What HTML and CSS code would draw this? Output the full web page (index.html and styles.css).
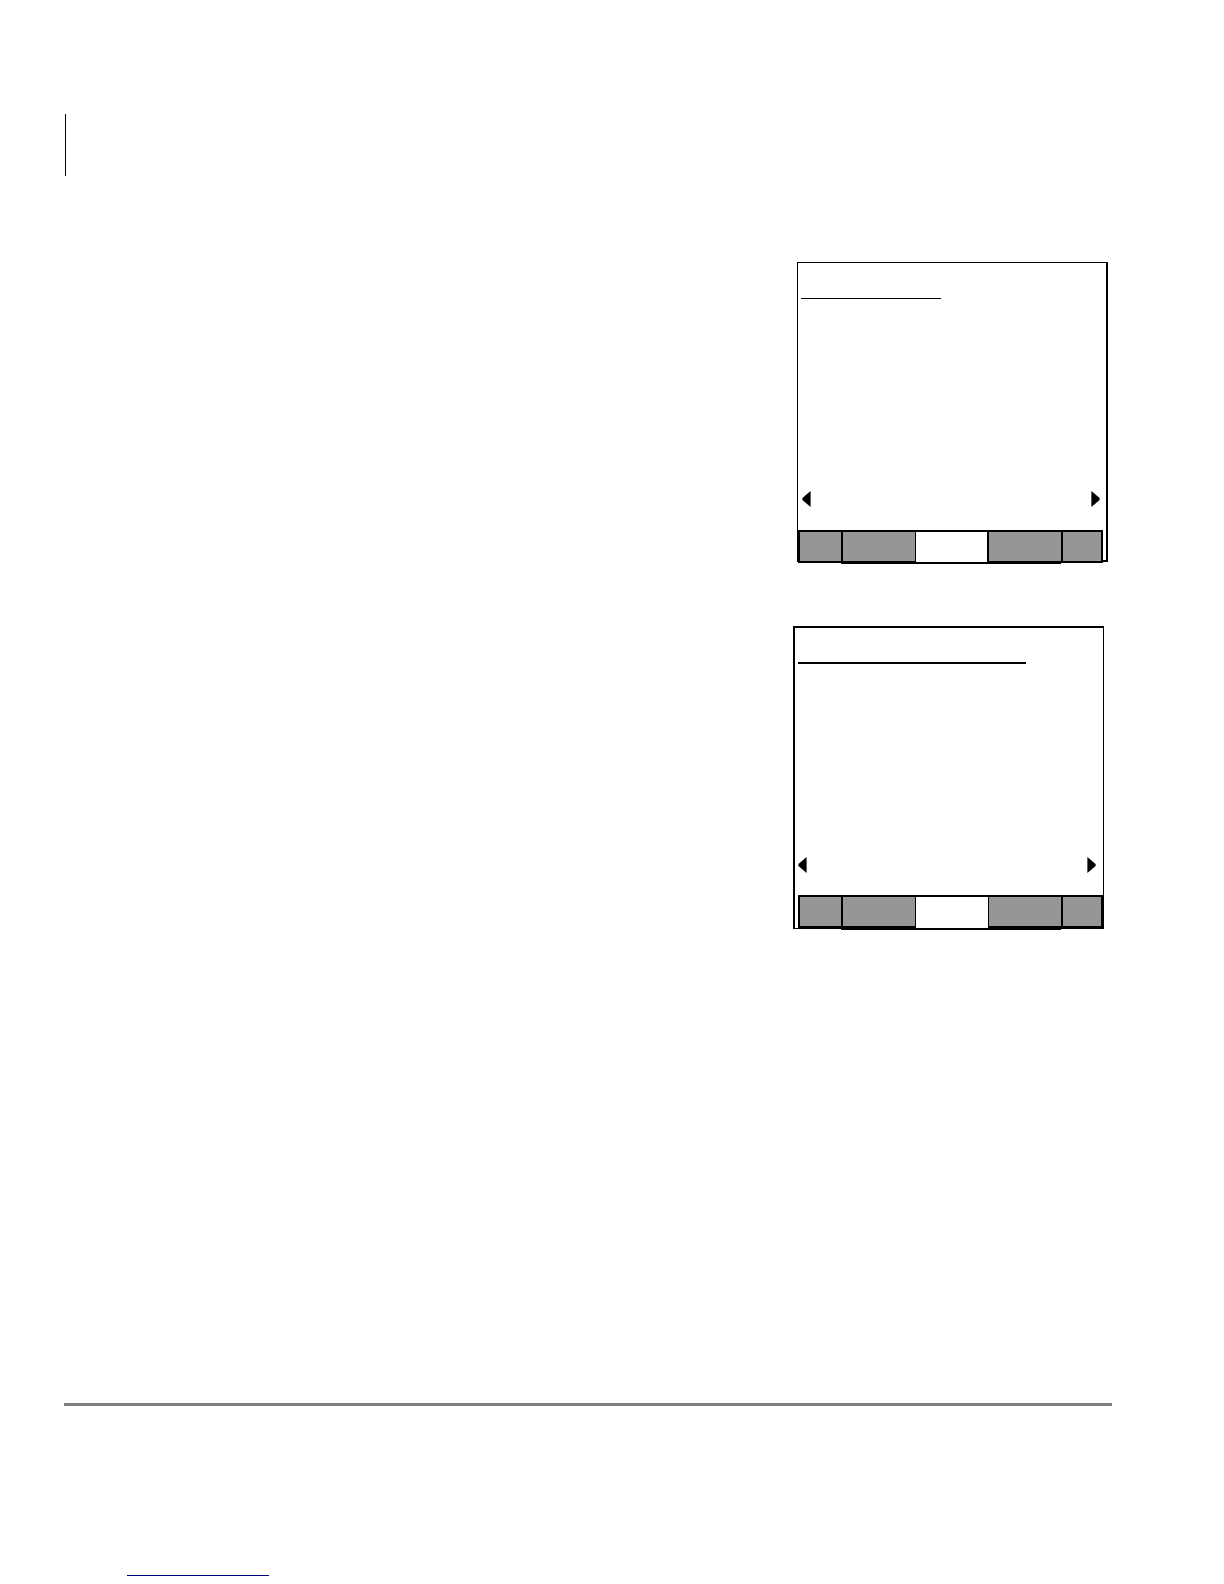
FILE: index.html
```
<!DOCTYPE html>
<html lang="en">
<head>
  <meta charset="UTF-8">
  <title>Phone screens</title>
  <link rel="stylesheet" href="styles.css">
</head>
<body>
  <header class="header"></header>

  <main class="screens">
    <section class="screen screen-first">
      <div class="screen-title"></div>
      <div class="arrows">
        <button class="arrow" aria-label="Previous">
          <svg width="9" height="16" viewBox="0 0 9 16"><path d="M8.6 0v16L.4 9V7z"/></svg>
        </button>
        <button class="arrow" aria-label="Next">
          <svg width="9" height="16" viewBox="0 0 9 16"><path d="M.4 0v16l8.2-7V7z"/></svg>
        </button>
      </div>
      <nav class="tabs">
        <button class="tab tab-edge" aria-label="Back"></button>
        <button class="tab" aria-label="Tab 1"></button>
        <button class="tab tab-active" aria-label="Tab 2"></button>
        <button class="tab" aria-label="Tab 3"></button>
        <button class="tab tab-edge tab-last" aria-label="Forward"></button>
      </nav>
    </section>

    <section class="screen screen-second">
      <div class="screen-title"></div>
      <div class="arrows">
        <button class="arrow" aria-label="Previous">
          <svg width="9" height="16" viewBox="0 0 9 16"><path d="M8.6 0v16L.4 9V7z"/></svg>
        </button>
        <button class="arrow" aria-label="Next">
          <svg width="9" height="16" viewBox="0 0 9 16"><path d="M.4 0v16l8.2-7V7z"/></svg>
        </button>
      </div>
      <nav class="tabs">
        <button class="tab tab-edge" aria-label="Back"></button>
        <button class="tab" aria-label="Tab 1"></button>
        <button class="tab tab-active" aria-label="Tab 2"></button>
        <button class="tab" aria-label="Tab 3"></button>
        <button class="tab tab-edge tab-last" aria-label="Forward"></button>
      </nav>
    </section>
  </main>

  <footer class="footer">
    <a class="footer-link" href="#" aria-label="Website"></a>
  </footer>
</body>
</html>
```
FILE: styles.css
```
* {
  box-sizing: border-box;
}
body {
  margin: 0;
  padding: 114px 112px 8px 64px;
  background-color: #fff;
  font-family: "Liberation Sans", Arial, sans-serif;
}
button {
  padding: 0;
  background: none;
  border: none;
  cursor: pointer;
}
.header {
  height: 62px;
  margin-left: 1px;
  border-left: 1px solid #000;
}

/* phone screens */
.screens {
  display: flex;
  flex-direction: column;
  align-items: flex-end;
  gap: 64px;
  padding: 86px 0 474px;
}
.screen {
  width: 100%;
  max-width: 311px;
  border: 1px solid #000;
}
.screen-first {
  margin-right: 4px;
  border-right-width: 2px;
  border-bottom-width: 2px;
}
.screen-second {
  margin-right: 8px;
  border-top-width: 2px;
  border-left-width: 2px;
}
.screen-title {
  width: 140px;
  height: 36px;
  margin-left: 3px;
  border-bottom: 1px solid #000;
}
.screen-second .screen-title {
  width: 228px;
  border-bottom-width: 2px;
}
.arrows {
  display: flex;
  justify-content: space-between;
  padding: 192px 6px 23px 4px;
}
.screen-second .arrows {
  padding: 193px 7px 22px 3px;
}
.arrow svg {
  display: block;
}

/* tabs hang over the lower edge of the screen */
.tabs {
  display: grid;
  grid-template-columns: 43fr 74fr 72fr 74fr 42fr;
  height: 34px;
  margin: 0 3px -4px 0;
}
.screen-second .tabs {
  grid-template-columns: 43fr 74fr 73fr 73fr 43fr;
  height: 35px;
  margin: 0 -1px -2px 3px;
}
.tab {
  background-color: #969696;
  border: solid #000;
  border-width: 2px 0 3px 2px;
  border-radius: 0;
}
.tab-edge {
  margin-bottom: 1px;
  border-bottom-width: 2px;
}
.tab-last {
  border-right-width: 2px;
}
.tab-active {
  background-color: #fff;
  border-bottom-width: 2px;
  border-left-width: 1px;
}
.screen-second .tab:not(.tab-active) {
  border-bottom-width: 4px;
}
.screen-second .tab.tab-edge {
  border-bottom-width: 3px;
}
.screen-second .tab-last {
  border-right-width: 3px;
}
.screen-second .tab-active + .tab {
  border-left-width: 1px;
}

.footer {
  padding: 169px 0 0 63px;
  border-top: 3px solid #808080;
}
.footer-link {
  display: block;
  width: 142px;
  border-bottom: 1px solid #000080;
}
```
